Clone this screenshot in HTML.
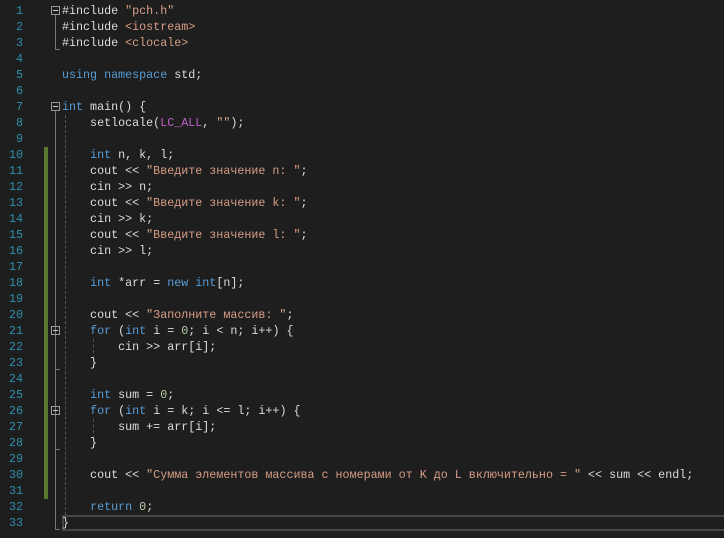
<!DOCTYPE html>
<html><head><meta charset="utf-8"><style>
body{margin:0;background:#1e1e1e;width:724px;height:538px;overflow:hidden;position:relative;font-family:"Liberation Mono","DejaVu Sans Mono",monospace;font-size:11.7px;color:#dcdcdc}
.l{position:absolute;left:62px;height:16px;line-height:16px;white-space:pre}
.n{position:absolute;left:0;width:23px;text-align:right;height:16px;line-height:16px;color:#2b91af}
.k{color:#569cd6}.s{color:#d69d85}.m{color:#bd63c5}.g{color:#b5cea8}
.fb{position:absolute;left:51px;width:7px;height:7px;border:1px solid #999;box-sizing:content-box}
.fb:after{content:"";position:absolute;left:1px;top:3px;width:5px;height:1px;background:#ccc}
.v{position:absolute;width:1px;background:#777}
.h{position:absolute;height:1px;width:5px;background:#777}
.d{position:absolute;width:0;border-left:1px dashed #555}
</style></head><body>
<div style="position:absolute;left:44px;top:147px;width:4px;height:352px;background:#5a7a33"></div>
<div style="position:absolute;left:62px;top:515px;width:662px;height:12px;border:2px solid #464646;box-sizing:content-box;border-right:none"></div>

<div class="fb" style="top:6px"></div><div class="v" style="left:55px;top:15px;height:34px"></div><div class="h" style="left:55px;top:49px"></div>
<div class="fb" style="top:102px"></div><div class="v" style="left:55px;top:111px;height:418px"></div><div class="h" style="left:55px;top:529px"></div>
<div class="fb" style="top:326px"></div><div class="h" style="left:55px;top:369px"></div>
<div class="fb" style="top:406px"></div><div class="h" style="left:55px;top:449px"></div>
<div class="d" style="left:65px;top:115px;height:400px"></div>
<div class="d" style="left:93px;top:339px;height:20px"></div>
<div class="d" style="left:93px;top:419px;height:20px"></div>

<div class="n" style="top:3px">1</div><div class="n" style="top:19px">2</div><div class="n" style="top:35px">3</div><div class="n" style="top:51px">4</div><div class="n" style="top:67px">5</div><div class="n" style="top:83px">6</div><div class="n" style="top:99px">7</div><div class="n" style="top:115px">8</div><div class="n" style="top:131px">9</div><div class="n" style="top:147px">10</div><div class="n" style="top:163px">11</div><div class="n" style="top:179px">12</div><div class="n" style="top:195px">13</div><div class="n" style="top:211px">14</div><div class="n" style="top:227px">15</div><div class="n" style="top:243px">16</div><div class="n" style="top:259px">17</div><div class="n" style="top:275px">18</div><div class="n" style="top:291px">19</div><div class="n" style="top:307px">20</div><div class="n" style="top:323px">21</div><div class="n" style="top:339px">22</div><div class="n" style="top:355px">23</div><div class="n" style="top:371px">24</div><div class="n" style="top:387px">25</div><div class="n" style="top:403px">26</div><div class="n" style="top:419px">27</div><div class="n" style="top:435px">28</div><div class="n" style="top:451px">29</div><div class="n" style="top:467px">30</div><div class="n" style="top:483px">31</div><div class="n" style="top:499px">32</div><div class="n" style="top:515px">33</div>

<div class="l" style="top:3px">#include <span class="s">"pch.h"</span></div>
<div class="l" style="top:19px">#include <span class="s">&lt;iostream&gt;</span></div>
<div class="l" style="top:35px">#include <span class="s">&lt;clocale&gt;</span></div>
<div class="l" style="top:67px"><span class="k">using namespace</span> std;</div>
<div class="l" style="top:99px"><span class="k">int</span> main() {</div>
<div class="l" style="top:115px">    setlocale(<span class="m">LC_ALL</span>, <span class="s">""</span>);</div>
<div class="l" style="top:147px">    <span class="k">int</span> n, k, l;</div>
<div class="l" style="top:163px">    cout &lt;&lt; <span class="s">"Введите значение n: "</span>;</div>
<div class="l" style="top:179px">    cin &gt;&gt; n;</div>
<div class="l" style="top:195px">    cout &lt;&lt; <span class="s">"Введите значение k: "</span>;</div>
<div class="l" style="top:211px">    cin &gt;&gt; k;</div>
<div class="l" style="top:227px">    cout &lt;&lt; <span class="s">"Введите значение l: "</span>;</div>
<div class="l" style="top:243px">    cin &gt;&gt; l;</div>
<div class="l" style="top:275px">    <span class="k">int</span> *arr = <span class="k">new int</span>[n];</div>
<div class="l" style="top:307px">    cout &lt;&lt; <span class="s">"Заполните массив: "</span>;</div>
<div class="l" style="top:323px">    <span class="k">for</span> (<span class="k">int</span> i = <span class="g">0</span>; i &lt; n; i++) {</div>
<div class="l" style="top:339px">        cin &gt;&gt; arr[i];</div>
<div class="l" style="top:355px">    }</div>
<div class="l" style="top:387px">    <span class="k">int</span> sum = <span class="g">0</span>;</div>
<div class="l" style="top:403px">    <span class="k">for</span> (<span class="k">int</span> i = k; i &lt;= l; i++) {</div>
<div class="l" style="top:419px">        sum += arr[i];</div>
<div class="l" style="top:435px">    }</div>
<div class="l" style="top:467px">    cout &lt;&lt; <span class="s">"Сумма элементов массива с номерами от K до L включительно = "</span> &lt;&lt; sum &lt;&lt; endl;</div>
<div class="l" style="top:499px">    <span class="k">return</span> <span class="g">0</span>;</div>
<div class="l" style="top:515px">}</div>
</body></html>
